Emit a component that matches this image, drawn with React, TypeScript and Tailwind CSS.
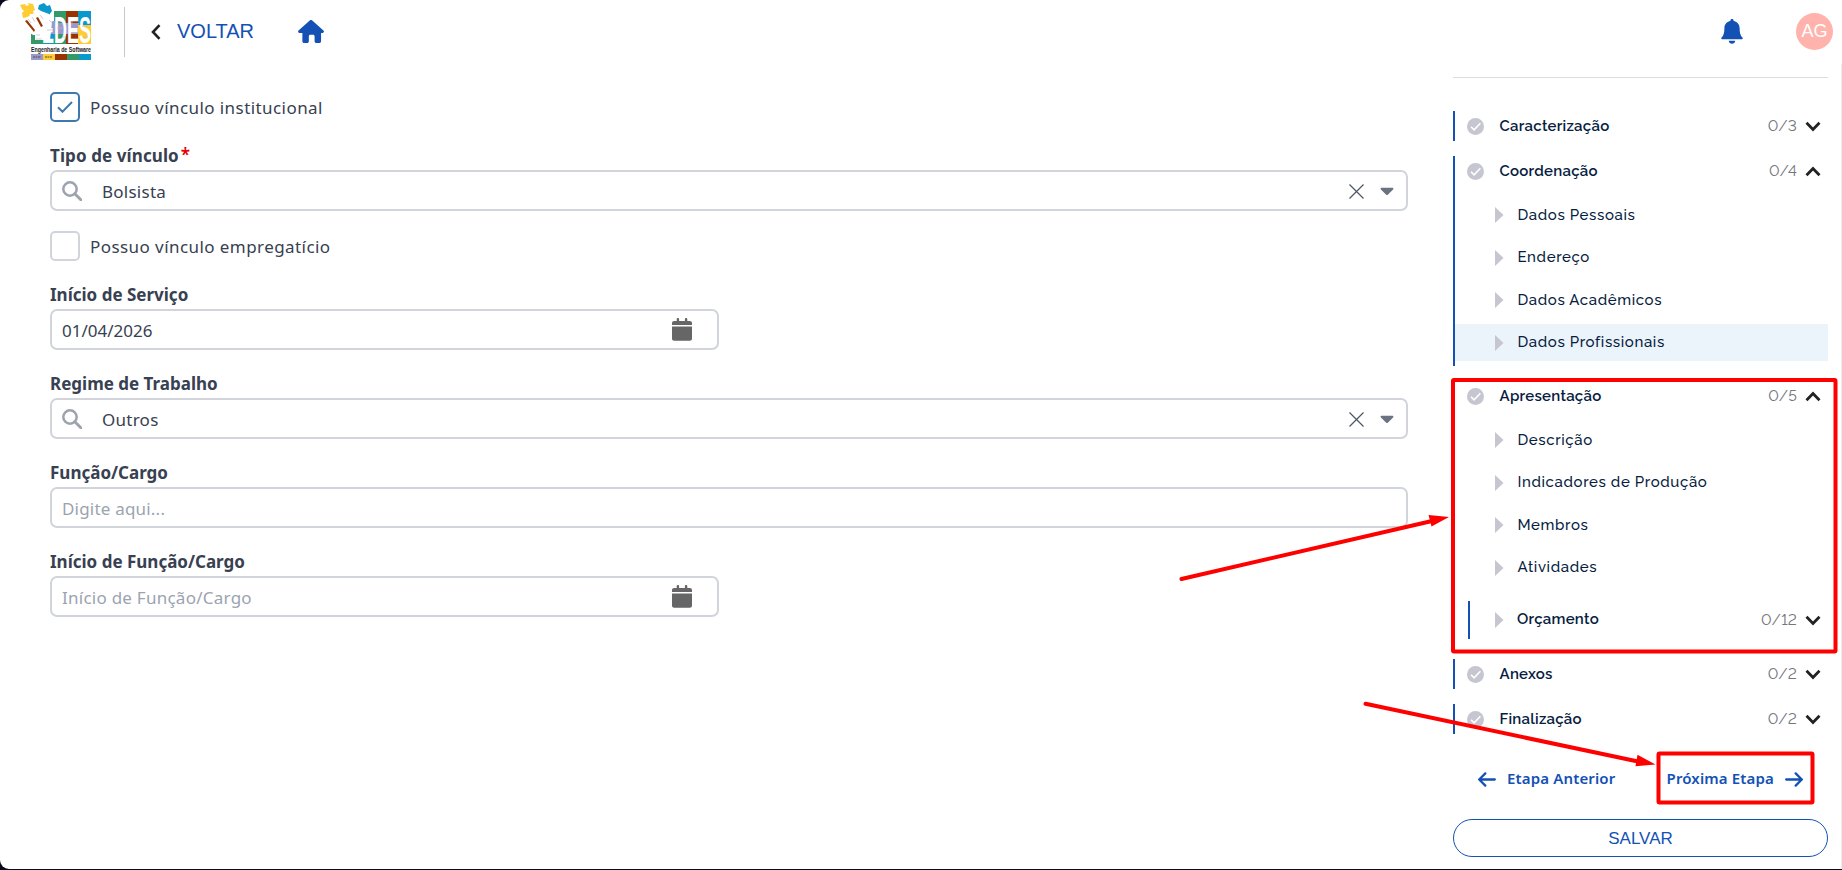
import React, { FC, ReactNode } from "react";

interface Step {
  label: string;
  count: string;
  open?: boolean;
  children?: string[];
  active?: string;
  nested?: { label: string; count: string };
}

const steps: Step[] = [
  { label: "Caracterização", count: "0/3" },
  {
    label: "Coordenação",
    count: "0/4",
    open: true,
    children: ["Dados Pessoais", "Endereço", "Dados Acadêmicos", "Dados Profissionais"],
    active: "Dados Profissionais",
  },
  {
    label: "Apresentação",
    count: "0/5",
    open: true,
    children: ["Descrição", "Indicadores de Produção", "Membros", "Atividades"],
    nested: { label: "Orçamento", count: "0/12" },
  },
  { label: "Anexos", count: "0/2" },
  { label: "Finalização", count: "0/2" },
];

const Logo: FC = () => (
  <svg width="72" height="58" viewBox="0 0 72 58" className="shrink-0 overflow-visible">
    <rect x="34" y="8" width="13" height="14" fill="#339966" />
    <rect x="46" y="8" width="13" height="14" fill="#993300" />
    <rect x="58" y="8" width="13" height="15" fill="#0a99cc" />
    <rect x="26" y="18" width="9" height="16" fill="#9999cc" />
    <rect x="34" y="20" width="13" height="12" fill="#9999cc" />
    <rect x="46" y="20" width="13" height="12" fill="#9999cc" />
    <rect x="58" y="22" width="13" height="10" fill="#ffcc33" />
    <rect x="11" y="31" width="13" height="10" fill="#339966" />
    <rect x="23" y="31" width="12" height="10" fill="#0a99cc" />
    <rect x="34" y="31" width="13" height="10" fill="#339966" />
    <rect x="46" y="31" width="13" height="10" fill="#993300" />
    <rect x="58" y="31" width="13" height="10" fill="#ffcc33" />
    <path d="M0 2l5-1 1 2 3-1-1-2 5 1 2 6-2 1 1 3-4 0-1 3-6 1-1-5 2-2-2-2z" fill="#ffcc33" />
    <path d="M19 2l5-2 3 3 3-1 2 6-3 4-3-1-3 3-4-2 2-4-3-2z" fill="#0a99cc" />
    <path d="M4 16l5-3 7 10 1-1-4-12 8-2 8 3 3 8-2 18h-17l-1-9-6-8z" fill="#fff" />
    <path d="M5 18l2-1 8 10-1 2z" fill="#993300" />
    <path d="M16 15l2-1 5 9-2 1z" fill="#993300" />
    <path d="M12 32h3v8h-3z" fill="#339966" />
    <text x="22" y="40" fontFamily="Liberation Sans" fontWeight="bold" fontSize="36" fill="#fff" textLength="49" lengthAdjust="spacingAndGlyphs">EDES</text>
    <path d="M8 16l3 4M12 14l3 5M20 12l3 4M16 32h4M16 36h6M27 27h5M29 17l3 3M37 25h5M42 34h4M52 18v4M52 30h5M62 23h6M63 34h5" stroke="#bbb" strokeWidth="0.7" />
    <rect x="11" y="41" width="60" height="10" fill="#fff" />
    <text x="11" y="49" fontFamily="Liberation Sans" fontWeight="bold" fontSize="8" fill="#222" textLength="60" lengthAdjust="spacingAndGlyphs">Engenharia de Software</text>
    <rect x="11" y="51" width="12" height="6" fill="#9999cc" />
    <rect x="23" y="51" width="12" height="6" fill="#ffcc33" />
    <rect x="35" y="51" width="12" height="6" fill="#993300" />
    <rect x="47" y="51" width="12" height="6" fill="#339966" />
    <rect x="59" y="51" width="12" height="6" fill="#0a99cc" />
    <path d="M13 54h8M25 54h7" stroke="#554" strokeWidth="1.2" strokeDasharray="2 0.5" />
  </svg>
);

const Header: FC = () => (
  <header className="flex h-16 shrink-0 items-start justify-between pl-5 pr-[9px]">
    <div className="flex items-center">
      <div className="pt-[3px]">
        <Logo />
      </div>
      <span className="ml-8 mt-0.5 h-[50px] w-px bg-[#c8c8c8]" />
      <button className="ml-[26px] mt-[2px] flex items-center text-[#1351b4]">
        <svg width="10" height="16" viewBox="0 0 10 16" fill="none" stroke="#222" strokeWidth="2.6">
          <path d="M8.5 1.2L2 8l6.5 6.8" />
        </svg>
        <span className="-mt-0.5 ml-4 w-[77px] text-left font-['Liberation_Sans'] text-[20px] leading-6">VOLTAR</span>
      </button>
      <svg width="26" height="23" viewBox="0 0 576 512" className="ml-[44px] mt-0.5" fill="#1351b4">
        <path d="M575.8 255.5c0 18-15 32.1-32 32.1h-32l.7 160.2c0 2.7-.2 5.4-.5 8.1V472c0 22.1-17.9 40-40 40h-64c-22.1 0-40-17.900-40-40v-112c0-17.700-14.300-32-32-32h-64c-17.700 0-32 14.300-32 32v112c0 22.100-17.900 40-40 40h-64c-22.100 0-40-17.900-40-40V287.600H32c-18 0-32-14-32-32.100 0-9 3-17 10-24L266.400 8c7-7 15-8 22-8s15 2 21 7l255.400 224.500c8 7 12 15 11 24z" />
      </svg>
    </div>
    <div className="flex items-center pt-[13px]">
      <svg width="22" height="25" viewBox="0 0 22 25" fill="#1351b4" className="mr-[53px]">
        <path d="M11 0c-1 0-1.600.7-1.600 1.500v.6C5.700 2.800 3.400 5.500 3.400 9.200c0 4.500-.8 7.300-2.800 9.300-.5.600-.6 1.700.5 1.700h19.800c1.100 0 1-1.100.5-1.700-2-2-2.800-4.800-2.800-9.300 0-3.700-2.300-6.400-6-7.100v-.6C12.600.7 12 0 11 0zM7.700 21.800h6.600C14 23.700 12.700 24.700 11 24.700s-3-1-3.300-2.900z" />
      </svg>
      <div className="flex size-[37px] items-center justify-center rounded-full bg-[#ffb3ac] font-['Liberation_Sans'] text-[18px] text-white">
        AG
      </div>
    </div>
  </header>
);

const CheckField: FC<{ label: string; checked?: boolean }> = ({ label, checked }) => (
  <div className="flex h-[30px] items-center">
    <span
      className={
        checked
          ? "flex size-[30px] items-center justify-center rounded-[5px] border-2 border-[#3d78b0]"
          : "size-[30px] rounded-[5px] border-2 border-[#d1d5db]"
      }
    >
      {checked && (
        <svg width="16" height="12" viewBox="0 0 16 12" fill="none" stroke="#3d78b0" strokeWidth="2">
          <path d="M1 6.200l4.500 4.500L15 1" />
        </svg>
      )}
    </span>
    <span className="ml-[10px] mt-0.5 font-['Noto_Sans'] text-[17px] tracking-[0.43px] text-[#374151]">{label}</span>
  </div>
);

const Field: FC<{ label: string; required?: boolean; short?: boolean; children: ReactNode }> = ({
  label,
  required,
  short,
  children,
}) => (
  <div>
    <label className="flex h-6 items-center pt-0.5 font-['Noto_Sans'] text-[17px] font-bold text-[#374151]">
      {required ? <span className="tracking-[0.1px]">{label}</span> : label}
      {required && <span className="-mt-0.5 ml-0.5 font-semibold text-[#e60000]">*</span>}
    </label>
    <div
      className={
        short
          ? "mt-[3px] flex h-[41px] w-[669px] items-center rounded-[7px] border-2 border-[#d1d5db] px-[10px]"
          : "mt-[3px] flex h-[41px] w-[1358px] items-center rounded-[7px] border-2 border-[#d1d5db] px-[10px]"
      }
    >
      {children}
    </div>
  </div>
);

const SelectValue: FC<{ value: string }> = ({ value }) => (
  <>
    <svg width="20" height="20" viewBox="0 0 20 20" fill="none" stroke="#9ca3af" strokeWidth="2.5" className="mt-px">
      <circle cx="8" cy="8" r="6.7" />
      <path d="M12.8 12.8l6 6" strokeWidth="2.9" strokeLinecap="round" />
    </svg>
    <span className="ml-5 mt-0.5 tracking-[0.25px] text-[#374151]">{value}</span>
    <svg width="15" height="15" viewBox="0 0 15 15" fill="none" stroke="#4b5563" strokeWidth="1.2" className="ml-auto mt-px">
      <path d="M.5.5l14 14M14.5.5l-14 14" />
    </svg>
    <svg width="14" height="9" viewBox="0 0 14 9" fill="#6b7280" className="ml-4 mr-[2.500px] mt-0.5">
      <path d="M1.500.8h11c1 0 1.200.9.600 1.600L7.800 7.700c-.5.500-1.100.5-1.600 0L.9 2.400C.3 1.700.5.8 1.500.8z" />
    </svg>
  </>
);

const CalendarIcon: FC = () => (
  <svg width="20" height="23" viewBox="0 0 20 23" fill="#666" className="ml-auto mr-[15px]">
    <path d="M0 7V5.200C0 3.900.9 3 2.200 3h2.500V1.200C4.700.5 5.200 0 5.900 0s1.200.5 1.200 1.200V3h5.800V1.200c0-.7.500-1.200 1.200-1.200s1.200.5 1.200 1.200V3h2.500C19.100 3 20 3.900 20 5.200V7zM0 8.500h20v12.300c0 1.200-.9 2-2.200 2H2.200C.9 22.800 0 22 0 20.800z" />
  </svg>
);

const Chevron: FC<{ open?: boolean }> = ({ open }) => (
  <svg width="16" height="11" viewBox="0 0 16 11" fill="none" stroke="#222" strokeWidth="2.8" className="ml-2 mr-[7px]">
    <path d={open ? "M1.5 9.2L8 2.5l6.5 6.7" : "M1.5 1.8L8 8.5l6.5-6.7"} />
  </svg>
);

const CheckCircle: FC = () => (
  <svg width="17" height="17" viewBox="0 0 17 17" fill="none">
    <circle cx="8.5" cy="8.5" r="8.5" fill="#c5c6d0" />
    <path d="M4 8.7l3.1 3.1 6.3-6.5" stroke="#fff" strokeWidth="1.6" />
  </svg>
);

const Triangle: FC = () => (
  <svg width="9" height="16" viewBox="0 0 9 16" fill="#c5c6d0">
    <path d="M0 0l8.5 8L0 16z" />
  </svg>
);

const StepGroup: FC<{ step: Step }> = ({ step }) => (
  <div className="border-l-2 border-[#1351b4]">
    <div className="flex h-[30px] items-center pl-[11.5px]">
      <CheckCircle />
      <span className="ml-4 font-semibold tracking-[0.25px]">{step.label}</span>
      <span className="ml-auto text-[15.5px] tracking-[0.2px] text-[#73767d] lining-nums">{step.count}</span>
      <Chevron open={step.open} />
    </div>
    {step.children && (
      <ul className={step.nested ? "flex flex-col gap-[5.5px] pt-[10.5px]" : "flex flex-col gap-[5.5px] pb-[5px] pt-[10.5px]"}>
        {step.children.map((child) => (
          <li
            key={child}
            className={
              child === step.active
                ? "flex h-[37px] items-center bg-[#ebf3fb] pl-10"
                : "flex h-[37px] items-center pl-10"
            }
          >
            <Triangle />
            <span className="ml-[13.5px] font-medium tracking-[0.62px]">{child}</span>
          </li>
        ))}
      </ul>
    )}
    {step.nested && (
      <div className="mb-[5px] ml-[13px] mt-[15px] flex h-[38px] items-center border-l-2 border-[#1351b4] pl-[25px]">
        <Triangle />
        <span className="-mt-0.5 ml-[13px] font-semibold tracking-[0.25px]">{step.nested.label}</span>
        <span className="ml-auto text-[15.5px] tracking-[0.2px] text-[#73767d] lining-nums">{step.nested.count}</span>
        <Chevron />
      </div>
    )}
  </div>
);

const StepArrow: FC<{ right?: boolean }> = ({ right }) => (
  <svg width="18" height="15" viewBox="0 0 18 15" fill="none" stroke="#1351b4" strokeWidth="2.3" strokeLinecap="round" strokeLinejoin="round">
    <path d={right ? "M1.2 7.5h15.5M10.7 1.4l6.1 6.1-6.1 6.1" : "M16.8 7.5H1.3M7.3 1.4L1.2 7.5l6.1 6.1"} />
  </svg>
);

const Sidebar: FC = () => (
  <aside className="w-[375px] shrink-0 pt-[13px]">
    <hr className="border-[#dcdcdc]" />
    <div className="mt-[33px] flex flex-col gap-[15px] font-['Raleway','Lato',sans-serif] text-[15px] text-[#071d41]">
      {steps.map((step) => (
        <StepGroup key={step.label} step={step} />
      ))}
    </div>
    <div className="mt-[30px] flex h-[30px] items-center justify-between px-[25px] font-['Noto_Sans'] text-[15px] font-semibold tracking-[0.15px] text-[#1351b4]">
      <button className="flex items-center gap-[11px]">
        <StepArrow />
        <span className="-mt-0.5">Etapa Anterior</span>
      </button>
      <button className="flex items-center gap-[11px]">
        <span className="-mt-0.5">Próxima Etapa</span>
        <StepArrow right />
      </button>
    </div>
    <button className="mt-[25px] h-[38px] w-full rounded-full border border-[#1351b4] pt-0.5 font-['Liberation_Sans'] text-[17px] text-[#1351b4]">
      SALVAR
    </button>
  </aside>
);

// red boxes and arrows drawn over the page
const Annotations: FC = () => (
  <svg width="1842" height="870" viewBox="0 0 1842 870" fill="none" stroke="#f00" strokeWidth="4" className="pointer-events-none absolute left-0 top-0">
    <rect x="1453" y="380" width="382.5" height="271.5" rx="1" />
    <rect x="1658.5" y="753.5" width="154" height="49" rx="1" />
    <path d="M1181.5 579L1432 521M1365.5 703.8L1638 761.5" strokeLinecap="round" />
    <path d="M1449 517l-20.5-2 3 11.5zM1655.5 764.5l-18-9.8-2 11.5z" fill="#f00" stroke="none" />
  </svg>
);

const App: FC = () => {
  return (
    <div className="relative h-[870px] w-[1842px] overflow-hidden bg-[#070b1c]">
      <div className="flex h-[869px] flex-col rounded-l-[9px] bg-white">
        <Header />
        <div className="flex grow border-r border-[#ececec] pl-[50px] pr-[13px]">
          <main className="flex w-[1403px] shrink-0 flex-col pt-7 font-['Noto_Sans'] text-[17px]">
            <CheckField label="Possuo vínculo institucional" checked />
            <div className="mt-[21px]">
              <Field label="Tipo de vínculo" required>
                <SelectValue value="Bolsista" />
              </Field>
            </div>
            <div className="mt-5">
              <CheckField label="Possuo vínculo empregatício" />
            </div>
            <div className="mt-[21px] flex flex-col gap-[21px]">
              <Field label="Início de Serviço" short>
                <span className="mt-0.5 text-[#374151]">01/04/2026</span>
                <CalendarIcon />
              </Field>
              <Field label="Regime de Trabalho">
                <SelectValue value="Outros" />
              </Field>
              <Field label="Função/Cargo">
                <span className="mt-0.5 tracking-[0.2px] text-[#9ca3af]">Digite aqui...</span>
              </Field>
              <Field label="Início de Função/Cargo" short>
                <span className="mt-0.5 tracking-[0.25px] text-[#9ca3af]">Início de Função/Cargo</span>
                <CalendarIcon />
              </Field>
            </div>
          </main>
          <Sidebar />
        </div>
      </div>
      <Annotations />
    </div>
  );
};

export default App;
